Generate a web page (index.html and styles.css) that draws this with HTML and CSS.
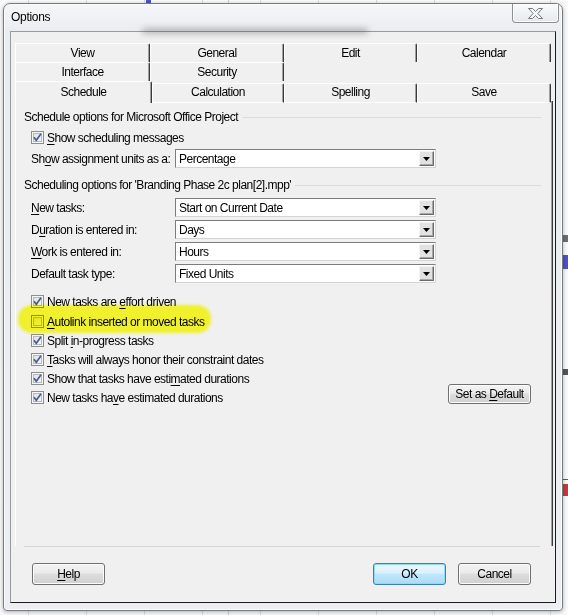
FILE: index.html
```html
<!DOCTYPE html>
<html lang="en">
<head>
<meta charset="utf-8">
<title>Options</title>
<link rel="stylesheet" href="styles.css">
</head>
<body>
<div class="window">
  <div class="titlebar">
    <span class="title">Options</span>
    <span class="glass-smudge"></span>
    <span class="close" aria-label="Close">
      <svg width="15" height="11" viewBox="0 0 15 11"><polygon points="0.5,0.5 4.5,0.5 7.5,3.5 10.5,0.5 14.5,0.5 9.8,5.5 14.5,10.5 10.5,10.5 7.5,7.5 4.5,10.5 0.5,10.5 5.2,5.5" fill="#f6f7f8" stroke="#75787c"/></svg>
    </span>
  </div>

  <div class="client">
    <div class="tabs">
      <div class="tab-row">
        <div class="tab">View</div>
        <div class="tab">General</div>
        <div class="tab">Edit</div>
        <div class="tab">Calendar</div>
      </div>
      <div class="tab-row">
        <div class="tab">Interface</div>
        <div class="tab">Security</div>
      </div>
      <div class="tab-row front">
        <div class="tab active">Schedule</div>
        <div class="tab">Calculation</div>
        <div class="tab">Spelling</div>
        <div class="tab">Save</div>
      </div>
    </div>

    <div class="panel">
      <div class="group-head"><span>Schedule options for Microsoft Office Project</span></div>
      <div class="check-row first-check">
        <span class="box"><svg width="11" height="11" viewBox="0 0 11 11"><path d="M2 5.2 L4.3 8.3 L9 1.8" fill="none" stroke="#4a5e92" stroke-width="1.7"/></svg></span>
        <span><u>S</u>how scheduling messages</span>
      </div>
      <div class="field-row units-row">
        <span>Sh<u>o</u>w assignment units as a:</span>
        <div class="select"><span>Percentage</span><span class="arrow"><svg width="7" height="4" viewBox="0 0 7 4"><polygon points="0,0 7,0 3.5,4" fill="#000"/></svg></span></div>
      </div>

      <div class="group-head second"><span>Scheduling options for 'Branding Phase 2c plan[2].mpp'</span></div>
      <div class="field-row lead">
        <span><u>N</u>ew tasks:</span>
        <div class="select"><span>Start on Current Date</span><span class="arrow"><svg width="7" height="4" viewBox="0 0 7 4"><polygon points="0,0 7,0 3.5,4" fill="#000"/></svg></span></div>
      </div>
      <div class="field-row">
        <span>D<u>u</u>ration is entered in:</span>
        <div class="select"><span>Days</span><span class="arrow"><svg width="7" height="4" viewBox="0 0 7 4"><polygon points="0,0 7,0 3.5,4" fill="#000"/></svg></span></div>
      </div>
      <div class="field-row">
        <span><u>W</u>ork is entered in:</span>
        <div class="select"><span>Hours</span><span class="arrow"><svg width="7" height="4" viewBox="0 0 7 4"><polygon points="0,0 7,0 3.5,4" fill="#000"/></svg></span></div>
      </div>
      <div class="field-row">
        <span>Default task type:</span>
        <div class="select"><span>Fixed Units</span><span class="arrow"><svg width="7" height="4" viewBox="0 0 7 4"><polygon points="0,0 7,0 3.5,4" fill="#000"/></svg></span></div>
      </div>

      <div class="options-block">
        <div class="check-list">
          <div class="check-row">
            <span class="box"><svg width="11" height="11" viewBox="0 0 11 11"><path d="M2 5.2 L4.3 8.3 L9 1.8" fill="none" stroke="#4a5e92" stroke-width="1.7"/></svg></span>
            <span>New tasks are <u>e</u>ffort driven</span>
          </div>
          <div class="check-row gap-after">
            <span class="box"></span>
            <span><u>A</u>utolink inserted or moved tasks</span>
          </div>
          <div class="check-row">
            <span class="box"><svg width="11" height="11" viewBox="0 0 11 11"><path d="M2 5.2 L4.3 8.3 L9 1.8" fill="none" stroke="#4a5e92" stroke-width="1.7"/></svg></span>
            <span>Split <u>i</u>n-progress tasks</span>
          </div>
          <div class="check-row">
            <span class="box"><svg width="11" height="11" viewBox="0 0 11 11"><path d="M2 5.2 L4.3 8.3 L9 1.8" fill="none" stroke="#4a5e92" stroke-width="1.7"/></svg></span>
            <span><u>T</u>asks will always honor their constraint dates</span>
          </div>
          <div class="check-row">
            <span class="box"><svg width="11" height="11" viewBox="0 0 11 11"><path d="M2 5.2 L4.3 8.3 L9 1.8" fill="none" stroke="#4a5e92" stroke-width="1.7"/></svg></span>
            <span>Show that tasks have esti<u>m</u>ated durations</span>
          </div>
          <div class="check-row">
            <span class="box"><svg width="11" height="11" viewBox="0 0 11 11"><path d="M2 5.2 L4.3 8.3 L9 1.8" fill="none" stroke="#4a5e92" stroke-width="1.7"/></svg></span>
            <span>New tasks ha<u>v</u>e estimated durations</span>
          </div>
        </div>
        <button class="btn small">Set as <u>D</u>efault</button>
        <span class="marker"></span>
      </div>
    </div>

    <div class="footer">
      <button class="btn"><u>H</u>elp</button>
      <button class="btn default">OK</button>
      <button class="btn">Cancel</button>
    </div>
  </div>
</div>
</body>
</html>
```

FILE: styles.css
```css
html, body {
  margin: 0;
  padding: 0;
}

body {
  width: 568px;
  height: 615px;
  overflow: hidden;
  font-family: "Liberation Sans", Arial, sans-serif;
  font-size: 12px;
  letter-spacing: -0.5px;
  color: #000;
  background-color: #fafafa;
  /* gantt chart peeking out behind the dialog */
  background-image:
    linear-gradient(#6e6e6e, #6e6e6e),
    linear-gradient(#4b52c9, #4b52c9),
    linear-gradient(#555, #555),
    linear-gradient(#4848f0, #4848f0),
    linear-gradient(#c83a3a, #c83a3a),
    linear-gradient(#4b52c9, #4b52c9),
    linear-gradient(#cfcfcf, #cfcfcf),
    repeating-linear-gradient(90deg, transparent 0 28px, #dadada 28px 29px, transparent 29px 58px);
  background-position:
    560px 235px,
    560px 255px,
    560px 369px,
    560px 479px,
    560px 484px,
    146px 0,
    228px 0,
    0 0;
  background-size:
    8px 7px,
    8px 14px,
    8px 6px,
    8px 1px,
    8px 12px,
    5px 3px,
    1px 100%,
    100% 100%;
  background-repeat: no-repeat;
}

/* ---------- window frame ---------- */
.window {
  box-sizing: border-box;
  width: 560px;
  height: 608px;
  margin: 3px 0 0 3px;
  padding: 0 6px 7px;
  display: flex;
  flex-direction: column;
  border: 1px solid #777b80;
  border-radius: 7px 7px 4px 4px;
  background: linear-gradient(#f5f6f8, #eaedf0 28px, #eceef1);
  box-shadow: 0 1px 4px rgba(0, 0, 0, 0.3), inset 0 0 0 1px #fbfcfd;
}

.titlebar {
  position: relative;
  height: 27px;
  display: flex;
  align-items: flex-start;
}

.title {
  margin-top: 6px;
  padding-left: 1px;
  line-height: 15px;
  letter-spacing: -0.3px;
}

.glass-smudge {
  position: absolute;
  left: 132px;
  top: 25px;
  width: 226px;
  height: 4px;
  border-radius: 3px;
  background: rgba(50, 50, 50, 0.45);
  filter: blur(3px);
  pointer-events: none;
}

.close {
  margin-left: auto;
  margin-right: -3px;
  width: 47px;
  height: 19px;
  box-sizing: border-box;
  display: flex;
  align-items: center;
  justify-content: center;
  border: 1px solid #8d9094;
  border-top: none;
  border-radius: 0 0 4px 4px;
  background: linear-gradient(#fbfbfc, #e6e8eb);
  box-shadow: inset 0 0 0 1px #fdfdfd;
}

/* ---------- client area ---------- */
.client {
  flex: 1;
  box-sizing: border-box;
  display: flex;
  flex-direction: column;
  padding: 11px 2px 0 4px;
  border: 1px solid;
  border-color: #9a9a9a #1c1c1c #1c1c1c #9a9a9a;
  background: #f0f0f0;
}

/* ---------- tab strip ---------- */
.tabs {
  width: 538px;
}

.tab-row {
  display: grid;
  grid-template-columns: 135px 134px 133px 134px;
  height: 19px;
}

.tab-row.front {
  grid-template-columns: 137px 132px 133px 134px 2px;
  height: 20px;
  align-items: end;
  /* white top edge of the page, continued past the last tab */
  box-shadow: inset 0 -1px #fff;
}

.tab {
  box-sizing: border-box;
  height: 19px;
  padding-top: 1px;
  line-height: 17px;
  text-align: center;
  background: #f0f0f0;
  border-top: 1px solid #fff;
  border-left: 1px solid #fff;
  border-right: 1px solid #3a3a3a;
  border-top-right-radius: 2px;
  box-shadow: inset -1px 0 #a0a0a0;
}

.tab-row.front .tab {
  height: 20px;
  padding-top: 0;
  line-height: 17px;
  border-bottom: 1px solid #fff;
}

.tab-row.front .tab.active {
  height: 22px;
  line-height: 20px;
  border-bottom: none;
}

/* ---------- tab page ---------- */
.panel {
  box-sizing: border-box;
  width: 538px;
  height: 445px;
  padding: 8px 8px 0;
  border-left: 1px solid #fff;
  border-right: 1px solid #3a3a3a;
  box-shadow: inset -1px 0 #a0a0a0;
}

.group-head {
  display: flex;
  align-items: center;
  gap: 4px;
  height: 16px;
  line-height: 16px;
  margin-right: 3px;
}

.group-head::after {
  content: "";
  flex: 1;
  height: 1px;
  background: #d7dce0;
}

.group-head.second {
  margin-top: 9px;
}

.check-row {
  display: flex;
  align-items: center;
  gap: 3px;
  height: 19px;
  padding-left: 7px;
}

.first-check {
  margin-top: 3px;
}

.gap-after {
  margin-top: 1px;
}

.box {
  position: relative;
  flex: none;
  box-sizing: border-box;
  width: 13px;
  height: 13px;
  border: 1px solid #8e8f8f;
  background: linear-gradient(135deg, #dcdddf, #fbfbfb);
  box-shadow: inset 0 0 0 1px #f5f5f5, inset 0 0 0 2px #b6bbc0;
}

.box svg {
  position: absolute;
  left: 0;
  top: 0;
}

u {
  text-decoration-thickness: 1px;
  text-underline-offset: 2px;
}

.field-row {
  display: grid;
  grid-template-columns: 144px 261px;
  align-items: center;
  height: 19px;
  margin-top: 3px;
  padding-left: 7px;
}

.units-row {
  margin-top: 2px;
}

.field-row.lead {
  margin-top: 5px;
}

.select {
  box-sizing: border-box;
  height: 19px;
  display: flex;
  align-items: center;
  padding-left: 3px;
  border: 1px solid;
  border-color: #7d7d7d #d4d4d4 #d4d4d4 #7d7d7d;
  background: #fff;
}

.arrow {
  margin-left: auto;
  margin-right: 1px;
  box-sizing: border-box;
  width: 15px;
  height: 15px;
  display: flex;
  align-items: center;
  justify-content: center;
  border: 1px solid;
  border-color: #f4f4f4 #6a6a6a #6a6a6a #f4f4f4;
  background: #e2e2e2;
  box-shadow: inset -1px -1px #a8a8a8;
}

/* ---------- option checkboxes ---------- */
.options-block {
  position: relative;
  display: flex;
  margin-top: 9px;
}

.check-list {
  display: flex;
  flex-direction: column;
}

.marker {
  position: absolute;
  left: -6px;
  top: 13px;
  width: 193px;
  height: 28px;
  border-radius: 14px / 13px;
  background: #ffff30;
  mix-blend-mode: multiply;
  filter: blur(1.5px);
  pointer-events: none;
}

/* ---------- push buttons ---------- */
.btn {
  box-sizing: border-box;
  width: 73px;
  height: 22px;
  padding: 0;
  border: 1px solid #707070;
  border-radius: 3px;
  background: linear-gradient(#f3f3f3, #ebebeb 45%, #dddddd 50%, #d0d0d0);
  box-shadow: inset 0 0 0 1px #fcfcfc;
  font: inherit;
  letter-spacing: inherit;
  color: #000;
  line-height: 20px;
  text-align: center;
}

.btn.small {
  width: 83px;
  height: 20px;
  line-height: 18px;
  margin-left: auto;
  margin-right: 13px;
  align-self: flex-end;
  margin-bottom: 3px;
}

.btn.default {
  margin-left: auto;
  margin-right: 12px;
  border-color: #3c7fb1;
  background: linear-gradient(#ebf7fd, #dbf1fc 45%, #c1e7fc 50%, #aadbf5);
  box-shadow: inset 0 0 0 1px #8fdcf8;
}

/* ---------- bottom buttons ---------- */
.footer {
  display: flex;
  margin: 0 13px 0 9px;
  padding: 16px 9px 0 8px;
  border-top: 1px solid #d6d6d6;
}
```
